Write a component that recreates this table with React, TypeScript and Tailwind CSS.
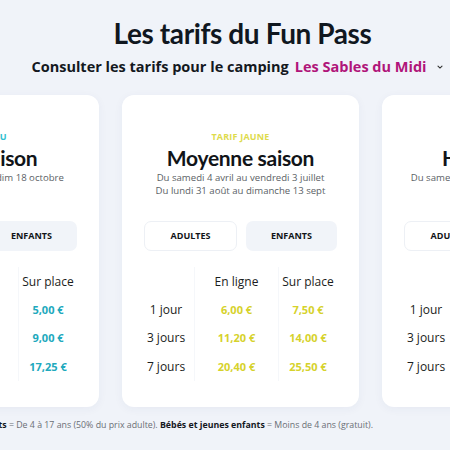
import React from "react";

type Season = {
  tag: string;
  name: string;
  dates: string[];
  tagColor: string;
  priceColor: string;
  prices: [string, string][];
};

const seasons: Season[] = [
  {
    tag: "TARIF BLEU",
    name: "Basse saison",
    dates: ["Du samedi 4 juillet au dim 18 octobre", "\u00a0"],
    tagColor: "text-[#2fc0cf]",
    priceColor: "text-[#21a9bd]",
    prices: [
      ["4,00 €", "5,00 €"],
      ["7,20 €", "9,00 €"],
      ["13,80 €", "17,25 €"],
    ],
  },
  {
    tag: "TARIF JAUNE",
    name: "Moyenne saison",
    dates: ["Du samedi 4 avril au vendredi 3 juillet", "Du lundi 31 août au dimanche 13 sept"],
    tagColor: "text-[#dedb4c]",
    priceColor: "text-[#d6d22c]",
    prices: [
      ["6,00 €", "7,50 €"],
      ["11,20 €", "14,00 €"],
      ["20,40 €", "25,50 €"],
    ],
  },
  {
    tag: "TARIF ROUGE",
    name: "Haute saison",
    dates: ["Du samedi 4 juillet au dimanche 30 août", "\u00a0"],
    tagColor: "text-[#e8475a]",
    priceColor: "text-[#e03a4f]",
    prices: [
      ["8,00 €", "10,00 €"],
      ["15,20 €", "19,00 €"],
      ["27,60 €", "34,50 €"],
    ],
  },
];

const days = ["1 jour", "3 jours", "7 jours"];

function SeasonCard({ s }: { s: Season }) {
  return (
    <div className="w-[237px] shrink-0 h-[312px] bg-white rounded-[12px] shadow-[0_2px_10px_rgba(40,60,110,0.05)] px-[22px] pt-[36px] flex flex-col items-center">
      <div className={`text-[9px] font-bold tracking-[0.2px] leading-[12px] ${s.tagColor}`}>{s.tag}</div>
      <div
        className="text-[21px] font-bold text-[#111418] leading-[26px] mt-[2px] whitespace-nowrap tracking-[-0.3px]"
        style={{ fontFamily: "Lato, sans-serif" }}
      >
        {s.name}
      </div>
      <div className="mt-[1px] text-[9.6px] text-[#5b5f66] leading-[12.5px] text-center whitespace-nowrap">
        {s.dates.map((d, i) => (
          <div key={i}>{d}</div>
        ))}
      </div>

      {/* Tabs */}
      <div className="mt-[24px] w-full flex gap-[9px]">
        <div className="flex-1 h-[30px] rounded-[7px] border border-[#edf0f5] bg-white flex items-center justify-center text-[9px] font-bold text-[#111418]">
          ADULTES
        </div>
        <div className="flex-1 h-[30px] rounded-[7px] bg-[#f1f4f9] flex items-center justify-center text-[9px] font-bold text-[#111418]">
          ENFANTS
        </div>
      </div>

      {/* Price table */}
      <div className="mt-[16px] w-full flex text-[12px] leading-[15px] whitespace-nowrap">
        <div className="w-[44px] flex flex-col items-center pt-[28px] text-[#1b1d21]">
          {days.map((d) => (
            <div key={d} className="h-[28.5px] flex items-center">
              {d}
            </div>
          ))}
        </div>
        <div className="w-[84px] ml-[6px] flex flex-col items-center border-l border-[#f5f7fa]">
          <div className="h-[28px] flex items-center text-[#1b1d21]">En ligne</div>
          {s.prices.map((p) => (
            <div key={p[0]} className={`h-[28.5px] flex items-center text-[11px] font-bold ${s.priceColor}`}>
              {p[0]}
            </div>
          ))}
        </div>
        <div className="flex-1 flex flex-col items-center border-l border-[#f5f7fa]">
          <div className="h-[28px] flex items-center text-[#1b1d21]">Sur place</div>
          {s.prices.map((p) => (
            <div key={p[1]} className={`h-[28.5px] flex items-center text-[11px] font-bold ${s.priceColor}`}>
              {p[1]}
            </div>
          ))}
        </div>
      </div>
    </div>
  );
}

export default function App() {
  return (
    <main
      className="w-[450px] h-[450px] overflow-hidden bg-[#f0f3f9] flex flex-col"
      style={{ fontFamily: "'Open Sans', sans-serif" }}
    >
      {/* Heading */}
      <h1
        className="mt-[15px] pl-[35px] text-center text-[28px] leading-[36px] font-bold text-[#10171f] tracking-[-0.4px]"
        style={{ fontFamily: "Lato, sans-serif" }}
      >
        Les tarifs du Fun Pass
      </h1>
      <div className="mt-[6px] pl-[25px] flex items-center justify-center gap-[6px] text-[14.5px] font-bold leading-[20px] whitespace-nowrap">
        <span className="text-[#14181e]">Consulter les tarifs pour le camping</span>
        <span className="text-[#b0157a]">Les Sables du Midi</span>
        <svg width="8" height="8" viewBox="0 0 10 10" className="ml-[3px]">
          <path d="M2.5 3.8 5 6.3 7.5 3.8" fill="none" stroke="#333" strokeWidth="1.4" strokeLinecap="round" />
        </svg>
      </div>

      {/* Cards */}
      <section className="mt-[18px] ml-[-138px] flex gap-[23px]">
        {seasons.map((s) => (
          <SeasonCard key={s.name} s={s} />
        ))}
      </section>

      {/* Footnote */}
      <div className="mt-[12px] w-[373px] flex justify-end">
        <p className="shrink-0 whitespace-nowrap text-[8.8px] text-[#6a6e75] leading-[12px]">
          <b className="text-[#14181e]">Adultes</b> = 18 ans et plus. <b className="text-[#14181e]">Enfants</b> = De 4 à 17 ans (50% du prix adulte).{" "}
          <b className="text-[#14181e]">Bébés et jeunes enfants</b> = Moins de 4 ans (gratuit).
        </p>
      </div>
    </main>
  );
}
